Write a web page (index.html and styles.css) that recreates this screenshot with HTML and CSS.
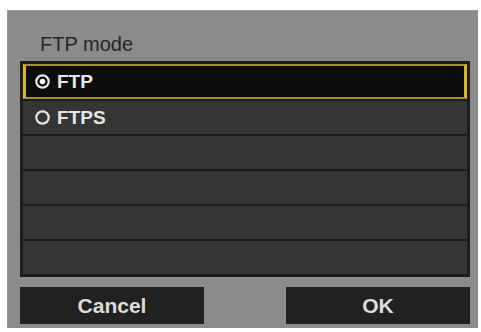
FILE: index.html
```html
<!DOCTYPE html>
<html lang="en">
<head>
  <meta charset="UTF-8">
  <meta name="viewport" content="width=device-width, initial-scale=1.0">
  <title>FTP mode</title>
  <link rel="stylesheet" href="styles.css">
</head>
<body>

  <div class="panel">
    <div class="title">FTP mode</div>

    <div class="list">
      <div class="row selected">
        <svg class="radio" width="15" height="15" viewBox="0 0 15 15">
          <circle cx="7.5" cy="7.5" r="6.2" fill="none" stroke="#e6e6e6" stroke-width="2.2"/>
          <circle cx="7.5" cy="7.5" r="2.8" fill="#f2f2f2"/>
        </svg>
        <span>FTP</span>
      </div>
      <div class="row">
        <svg class="radio" width="15" height="15" viewBox="0 0 15 15">
          <circle cx="7.5" cy="7.5" r="6.2" fill="none" stroke="#e6e6e6" stroke-width="2.2"/>
        </svg>
        <span>FTPS</span>
      </div>
      <div class="row"></div>
      <div class="row"></div>
      <div class="row"></div>
      <div class="row"></div>
    </div>

    <div class="buttons">
      <div class="btn">Cancel</div>
      <div class="btn">OK</div>
    </div>
  </div>

</body>
</html>
```

FILE: styles.css
```css
body {
  margin: 0;
  background: #fff;
  font-family: 'Liberation Sans', Arial, sans-serif;
}

.panel {
  margin: 10px 0 0 7px;
  width: 471px;
  height: 318px;
  box-sizing: border-box;
  background: #8b8b8b;
  border-top: 1px solid #9a9a9a;
  border-left: 1px solid #9a9a9a;
  padding: 21px 8px 6px 12px;
}

.title {
  height: 24px;
  line-height: 24px;
  font-size: 20px;
  color: #262626;
  padding-left: 20px;
  margin-bottom: 5px;
}

.list {
  background: #1c1c1c;
  padding: 3px;
  display: flex;
  flex-direction: column;
  gap: 2px;
}

.row {
  height: 33px;
  background: #353535;
  display: flex;
  align-items: center;
  padding-left: 12px;
  color: #e6e6e6;
  font-size: 19px;
  font-weight: bold;
}

.row.selected {
  background: #0e0e0e;
  border-top: 2px solid #a68e3c;
  border-bottom: 2px solid #a68e3c;
  border-left: 3px solid #d6b62e;
  border-right: 3px solid #d6b62e;
  height: 31px;
  padding-left: 9px;
}

.radio {
  margin-right: 7px;
}

.buttons {
  display: flex;
  justify-content: space-between;
  margin-top: 10px;
}

.btn {
  width: 184px;
  height: 37px;
  background: #212121;
  color: #dcdcdc;
  font-size: 21px;
  font-weight: bold;
  display: flex;
  align-items: center;
  justify-content: center;
}
```
